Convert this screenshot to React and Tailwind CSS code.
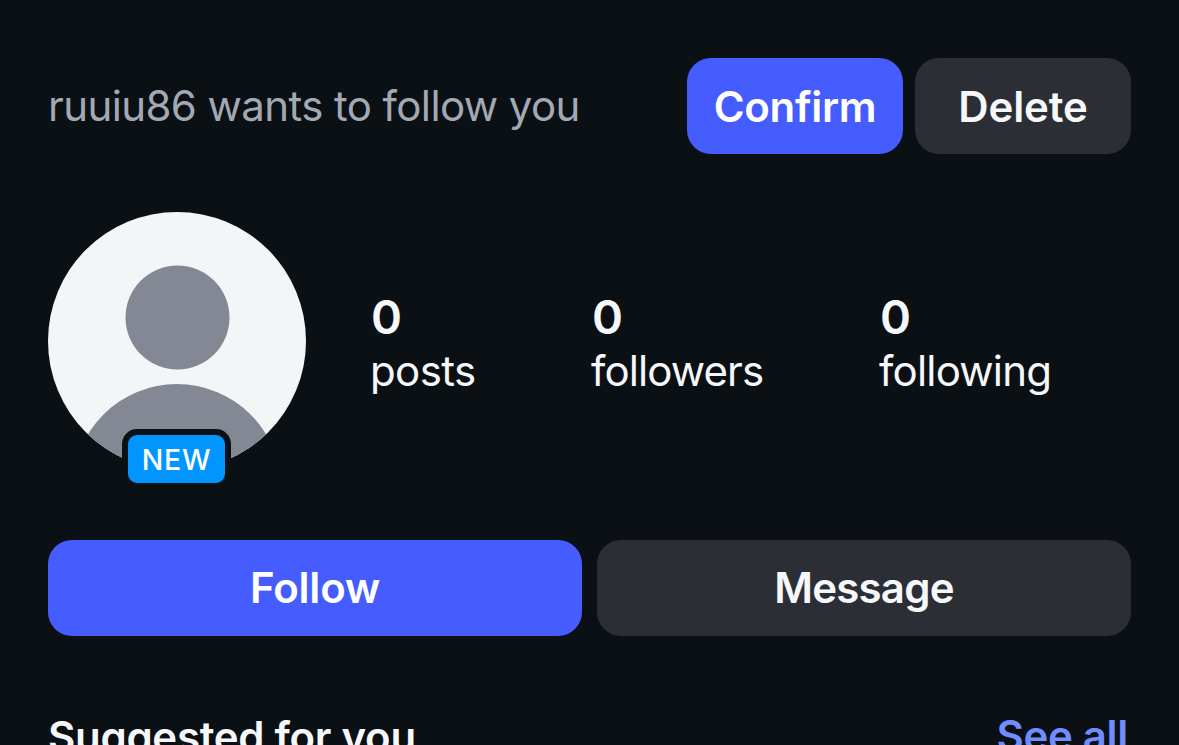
import React from "react";

const STATS = [
  { id: "posts", label: "posts", width: "w-[221px]", text: "tracking-[-0.6px]" },
  { id: "followers", label: "followers", width: "w-[288px]", text: "tracking-[-0.9px]" },
  { id: "following", label: "following", width: "w-[200px]", text: "tracking-[-0.8px]" },
];

function Button({ primary, className = "", children }) {
  return (
    <button
      className={`flex h-24 items-center justify-center rounded-3xl text-[42px] font-semibold leading-[50px] ${
        primary ? "bg-[#455dff] text-white" : "bg-[#2b2e35] text-[#f5f7fa]"
      } ${className}`}
    >
      {children}
    </button>
  );
}

function Avatar() {
  return (
    <div className="relative h-[258px] w-[258px] shrink-0">
      <div className="h-full w-full overflow-hidden rounded-full bg-[#f4f5f7]">
        <svg viewBox="0 0 258 258" className="h-full w-full" fill="#838894">
          <circle cx="129.5" cy="105.5" r="52" />
          <circle cx="129" cy="276" r="104" />
        </svg>
      </div>
      <span className="absolute -bottom-[19px] left-[74px] flex h-[60px] w-[109px] items-center justify-center rounded-[15px] border-6 border-[#0b1014] bg-[#0095ff] pt-0.5 text-[28.5px] font-medium leading-none tracking-[0.8px] text-white">
        NEW
      </span>
    </div>
  );
}

export default function App() {
  return (
    <div className="h-[745px] w-[1179px] overflow-hidden bg-[#0b1014] px-12 pt-[58px] font-['Inter','Liberation_Sans',sans-serif] text-[#f5f7fa]">
      <div className="flex items-center gap-3">
        <p className="flex-1 whitespace-nowrap text-[42px] leading-[50px] tracking-[-0.6px] text-[#a2a8b4]">
          ruuiu86 wants to follow you
        </p>
        <Button primary className="w-[216px] pt-0.5 tracking-[-0.3px]">
          Confirm
        </Button>
        <Button className="w-[216px] pt-0.5 tracking-[-0.1px]">Delete</Button>
      </div>

      <div className="mt-[58px] flex">
        <Avatar />
        <div className="ml-[65px] mt-[78px] flex">
          {STATS.map((stat) => (
            <div key={stat.id} className={stat.width}>
              <div className="text-[47px] font-semibold leading-[54px]">0</div>
              <div className={`-ml-px text-[42px] leading-[54px] ${stat.text}`}>{stat.label}</div>
            </div>
          ))}
        </div>
      </div>

      <div className="mt-[70px] flex gap-[15px]">
        <Button primary className="flex-1 tracking-[-0.2px]">
          Follow
        </Button>
        <Button className="flex-1 tracking-[-0.8px]">Message</Button>
      </div>

      <div className="mt-[75px] flex justify-between whitespace-nowrap pr-[3px] text-[42px] font-semibold leading-[50px] tracking-[-0.3px]">
        <h2 className="pt-px">Suggested for you</h2>
        <a className="text-[#708dff]">See all</a>
      </div>
    </div>
  );
}
